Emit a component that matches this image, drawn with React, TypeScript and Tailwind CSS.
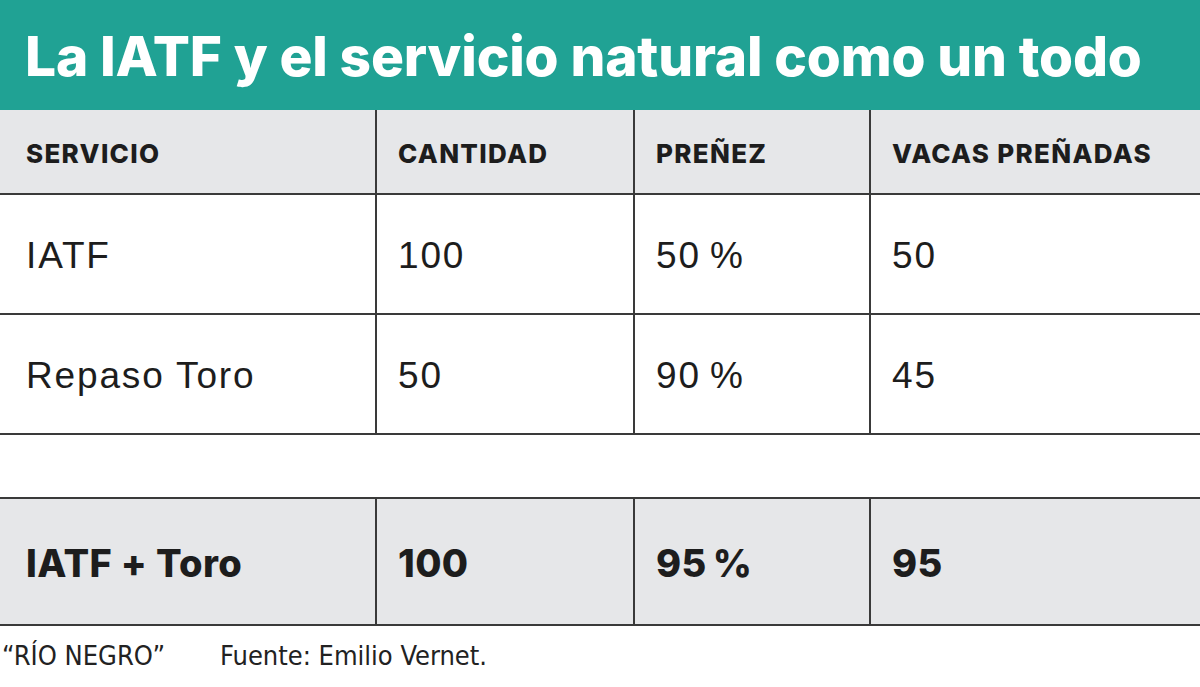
import React from 'react';

type Row = { servicio: string; cantidad: string; prenez: string; vacas: string };

const rows: Row[] = [
  { servicio: 'IATF', cantidad: '100', prenez: '50\u2009%', vacas: '50' },
  { servicio: 'Repaso Toro', cantidad: '50', prenez: '90\u2009%', vacas: '45' },
];

const total: Row = { servicio: 'IATF + Toro', cantidad: '100', prenez: '95\u2009%', vacas: '95' };

const cols = 'grid grid-cols-[377px_258px_236px_1fr]';
const cell = 'flex items-center pl-[21px] border-r-2 border-[#3a3a3a]';
const lastCell = 'flex items-center pl-[21px]';

const TableRow: React.FC<{ row: Row; className: string; textClass: string }> = ({ row, className, textClass }) => (
  <div className={`${cols} ${className} border-b-2 border-[#3a3a3a]`}>
    <div className={`${cell} pl-[26px] ${textClass}`}>{row.servicio}</div>
    <div className={`${cell} ${textClass}`}>{row.cantidad}</div>
    <div className={`${cell} ${textClass}`}>{row.prenez}</div>
    <div className={`${lastCell} ${textClass}`}>{row.vacas}</div>
  </div>
);

export default function App() {
  return (
    <div className="w-[1200px] h-[687px] bg-white overflow-hidden text-[#1d1d1d] font-['Liberation_Sans',sans-serif]">
      {/* Title band */}
      <div className="h-[110px] bg-[#20a294] flex items-center pl-[25px] pt-[2px]">
        <h1 className="text-white text-[55px] font-extrabold tracking-[-0.003em] font-['Inter',sans-serif] leading-none whitespace-nowrap">
          La IATF y el servicio natural como un todo
        </h1>
      </div>

      {/* Column headings */}
      <div className={`${cols} h-[85px] bg-[#e6e7e9] border-b-2 border-[#3a3a3a]`}>
        {['SERVICIO', 'CANTIDAD', 'PREÑEZ', 'VACAS PREÑADAS'].map((h, i) => (
          <div
            key={h}
            className={`${i < 3 ? cell : lastCell} ${i === 0 ? 'pl-[26px]' : ''} pt-[4px] text-[26px] font-extrabold font-['Inter',sans-serif] tracking-[0.05em] whitespace-nowrap`}
          >
            {h}
          </div>
        ))}
      </div>

      {rows.map((r) => (
        <TableRow key={r.servicio} row={r} className="h-[120px] bg-white" textClass="text-[37px] tracking-[0.05em] pt-[3px]" />
      ))}

      {/* Blank spacer row */}
      <div className="h-[64px] border-b-2 border-[#3a3a3a]" />

      <TableRow
        row={total}
        className="h-[127px] bg-[#e6e7e9]"
        textClass="text-[38px] font-extrabold font-['Inter',sans-serif] tracking-[0.01em] pt-[3px]"
      />

      {/* Footer */}
      <div className="flex items-center pt-[16px] text-[27px] leading-none font-['Liberation_Sans_Narrow','DejaVu_Sans_Condensed',sans-serif] text-[#222]">
        <span className="pl-[2px] w-[220px]">“RÍO NEGRO”</span>
        <span>Fuente: Emilio Vernet.</span>
      </div>
    </div>
  );
}
